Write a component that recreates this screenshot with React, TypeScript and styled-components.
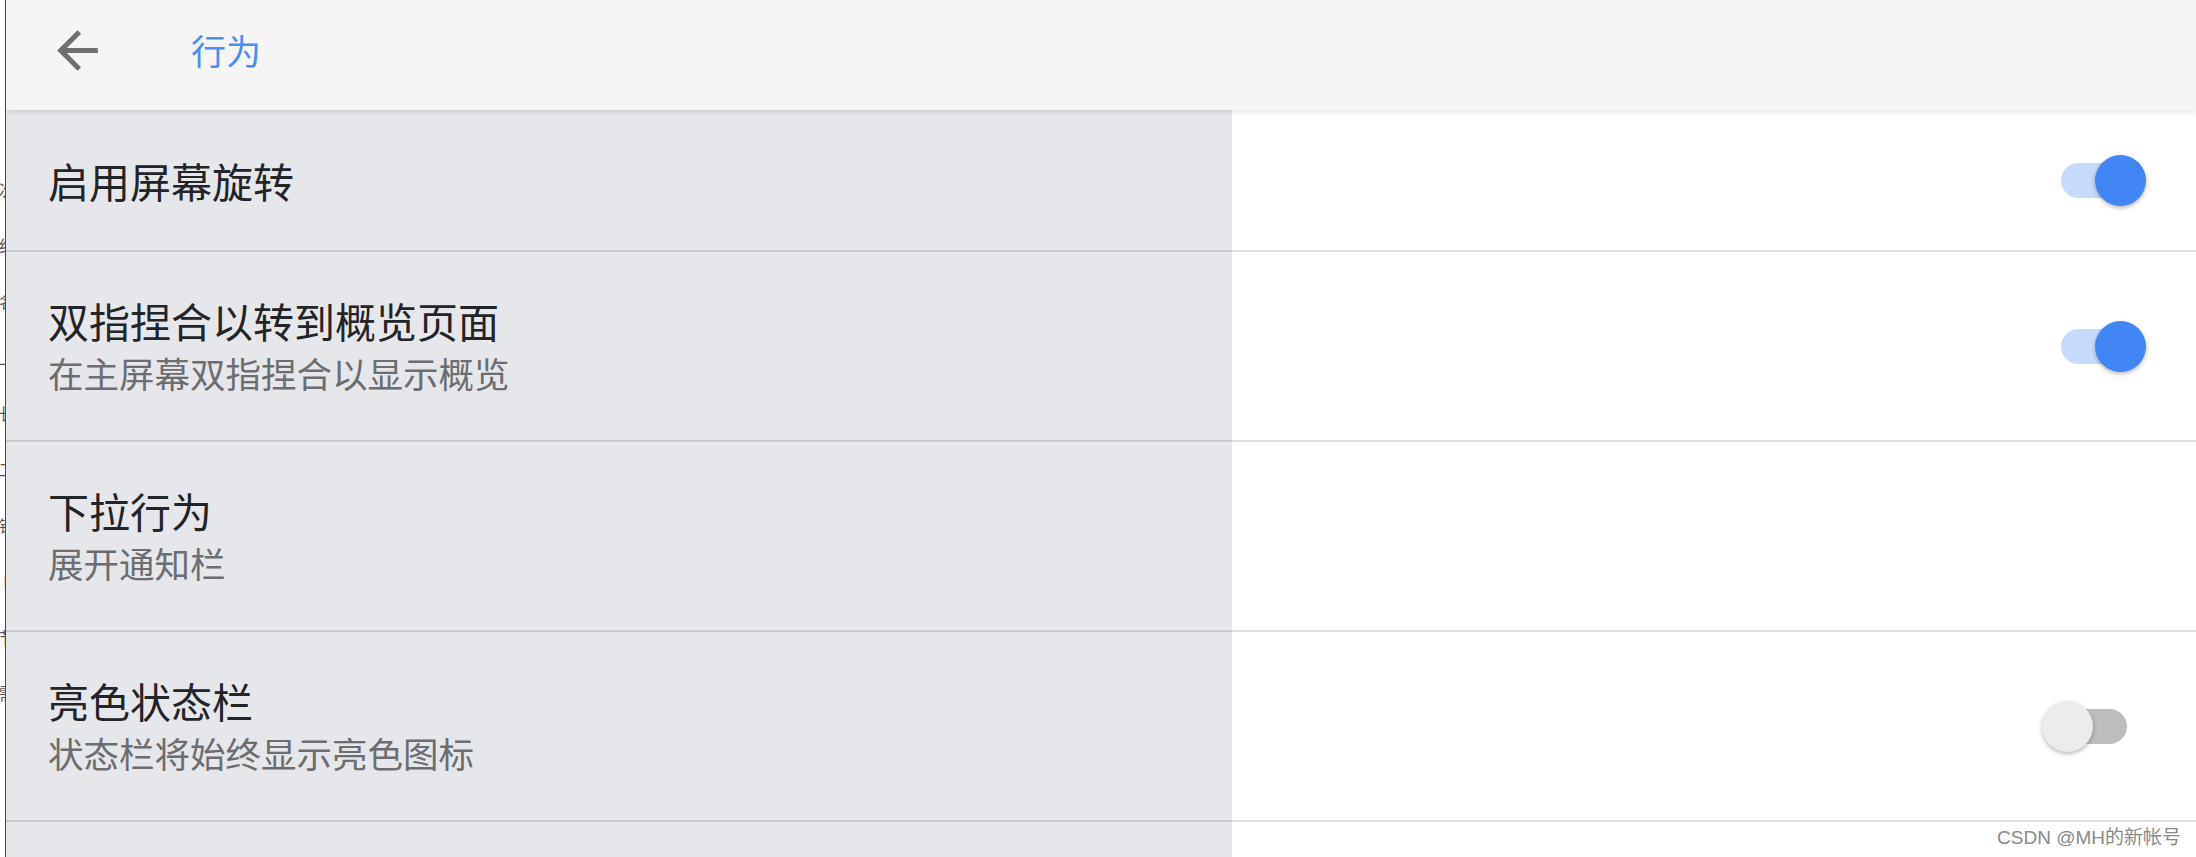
import React from 'react';
import styled, { createGlobalStyle } from 'styled-components';

const GlobalStyle = createGlobalStyle`
  html, body {
    margin: 0;
    padding: 0;
    background: #ffffff;
  }
  body {
    font-family: 'Noto Sans CJK SC', 'Noto Sans', sans-serif;
  }
`;

const Screen = styled.div`
  display: flex;
  width: 2196px;
  height: 857px;
  overflow: hidden;
`;

const EdgeStrip = styled.div`
  width: 5px;
  flex-shrink: 0;
  background: #ffffff;
  border-right: 1px solid #35524e;
  overflow: hidden;
  display: flex;
  flex-direction: column;
  align-items: flex-end;
  padding-top: 180px;
  gap: 38px;
`;

const Fragment = styled.span`
  font-size: 16px;
  line-height: 18px;
  color: #555;
  margin-right: -10px;
  white-space: nowrap;
`;

const Window = styled.div`
  position: relative;
  flex: 1;
  display: flex;
  flex-direction: column;
  background: #ffffff;
`;

const Header = styled.header`
  position: relative;
  z-index: 2;
  height: 110px;
  box-sizing: border-box;
  padding-bottom: 10px;
  flex-shrink: 0;
  display: flex;
  align-items: center;
  background: #f5f5f5;
  box-shadow: 0 2px 5px rgba(0, 0, 0, 0.1);
`;

const BackButton = styled.button`
  display: flex;
  align-items: center;
  justify-content: center;
  width: 61px;
  height: 61px;
  margin-left: 41px;
  padding: 0;
  border: none;
  background: none;
  color: #6f6f6f;
`;

const Title = styled.h1`
  margin: 0 0 0 83px;
  font-size: 35px;
  font-weight: 400;
  line-height: 48px;
  color: #4a8df5;
`;

const List = styled.div`
  display: flex;
  flex-direction: column;
`;

const Row = styled.div<{ $height: number }>`
  height: ${(p) => p.$height}px;
  flex-shrink: 0;
  box-sizing: border-box;
  display: flex;
  align-items: center;
  justify-content: space-between;
  padding: 0 69px 0 42px;
  border-bottom: 2px solid #dedede;
`;

const Texts = styled.div`
  display: flex;
  flex-direction: column;
`;

const RowTitle = styled.div`
  font-size: 41px;
  line-height: 54px;
  color: #212121;
`;

const RowSummary = styled.div`
  font-size: 35.5px;
  line-height: 52px;
  color: #757575;
`;

const Track = styled.div<{ $on: boolean }>`
  position: relative;
  width: 66px;
  height: 35px;
  border-radius: 18px;
  background: ${(p) => (p.$on ? '#c6dafc' : '#bdbdbd')};
`;

const Thumb = styled.div<{ $on: boolean }>`
  position: absolute;
  top: -8px;
  left: ${(p) => (p.$on ? '34px' : '-19px')};
  width: 51px;
  height: 51px;
  border-radius: 50%;
  background: ${(p) => (p.$on ? '#4285f4' : '#ececec')};
  box-shadow: 0 2px 4px rgba(0, 0, 0, 0.28);
`;

// grey press highlight laid over the left part of the list
const Highlight = styled.div`
  position: absolute;
  z-index: 1;
  left: 0;
  top: 110px;
  bottom: 0;
  width: 1226px;
  background: rgba(50, 58, 84, 0.12);
  pointer-events: none;
`;

const Watermark = styled.div`
  position: absolute;
  z-index: 3;
  right: 15px;
  bottom: 8px;
  font-family: 'Liberation Sans', 'Noto Sans CJK SC', sans-serif;
  font-size: 19px;
  color: #8a8a8a;
  text-shadow: 0 0 2px #fff, 0 0 2px #fff;
`;

const Switch = ({ on }: { on: boolean }) => (
  <Track $on={on}>
    <Thumb $on={on} />
  </Track>
);

const rows = [
  { title: '启用屏幕旋转', height: 142, toggle: true },
  { title: '双指捏合以转到概览页面', summary: '在主屏幕双指捏合以显示概览', height: 190, toggle: true },
  { title: '下拉行为', summary: '展开通知栏', height: 190 },
  { title: '亮色状态栏', summary: '状态栏将始终显示亮色图标', height: 190, toggle: false },
  { title: '', height: 190 },
];

const App = () => (
  <>
    <GlobalStyle />
    <Screen>
      <EdgeStrip>
        {['次', '约', '名', '上', '长', '工', '钟', 'H', '节', '需'].map((c, i) => (
          <Fragment key={i}>{c}</Fragment>
        ))}
      </EdgeStrip>
      <Window>
        <Header>
          <BackButton aria-label="返回">
            <svg width="61" height="61" viewBox="0 0 24 24" fill="currentColor">
              <path d="M20 11H7.83l5.59-5.59L12 4l-8 8 8 8 1.41-1.41L7.83 13H20v-2z" />
            </svg>
          </BackButton>
          <Title>行为</Title>
        </Header>
        <List>
          {rows.map((r, i) => (
            <Row key={i} $height={r.height}>
              <Texts>
                {r.title && <RowTitle>{r.title}</RowTitle>}
                {r.summary && <RowSummary>{r.summary}</RowSummary>}
              </Texts>
              {r.toggle !== undefined && <Switch on={r.toggle} />}
            </Row>
          ))}
        </List>
        <Highlight />
        <Watermark>CSDN @MH的新帐号</Watermark>
      </Window>
    </Screen>
  </>
);

export default App;
